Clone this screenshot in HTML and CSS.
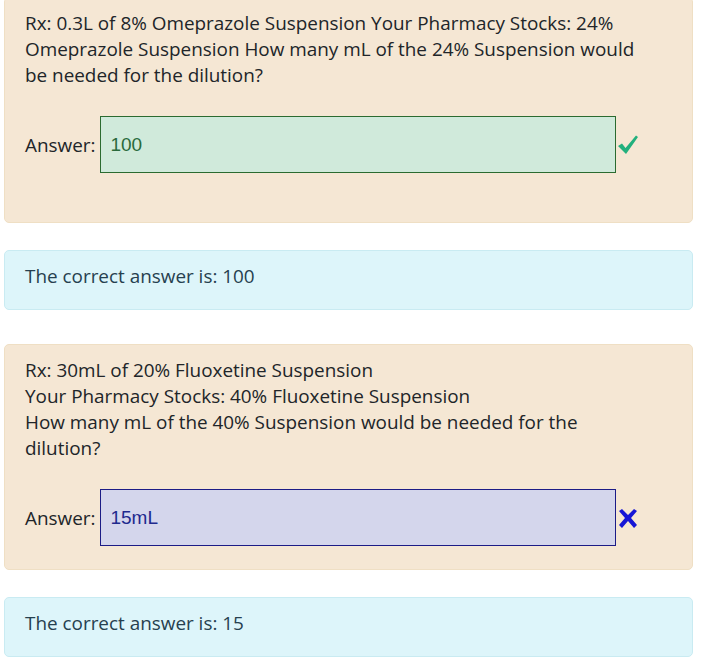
FILE: index.html
```html
<!DOCTYPE html>
<html lang="en">
<head>
    <meta charset="UTF-8">
    <title>Dilution Quiz</title>
    <link rel="stylesheet" href="styles.css">
</head>
<body>
    <div class="quiz">
        <!-- Question 1 -->
        <div class="card question tall">
            <p class="prompt">Rx: 0.3L of 8% Omeprazole Suspension Your Pharmacy Stocks: 24% Omeprazole Suspension How many mL of the 24% Suspension would be needed for the dilution?</p>
            <div class="answer-row">
                <label for="q1">Answer:</label>
                <input type="text" id="q1" class="answer correct" value="100">
                <svg class="mark" width="22" height="22" viewBox="0 0 22 22">
                    <path d="M1 12 L5 9.5 L8.5 14 L19 1.5 L21 3 L9 20 Z" fill="#22b07d"/>
                </svg>
            </div>
        </div>
        <div class="card info">The correct answer is: 100</div>

        <!-- Question 2 -->
        <div class="card question">
            <p class="prompt">Rx: 30mL of 20% Fluoxetine Suspension<br>Your Pharmacy Stocks: 40% Fluoxetine Suspension<br>How many mL of the 40% Suspension would be needed for the dilution?</p>
            <div class="answer-row">
                <label for="q2">Answer:</label>
                <input type="text" id="q2" class="answer wrong" value="15mL">
                <svg class="mark" width="22" height="22" viewBox="0 0 22 22">
                    <path d="M2 4 L5 2 L11 8 L17 2 L20 4 L14 11 L20 18 L17 21 L11 14 L5 21 L2 18 L8 11 Z" fill="#1616d6"/>
                </svg>
            </div>
        </div>
        <div class="card info">The correct answer is: 15</div>
    </div>
</body>
</html>
```

FILE: styles.css
```css
body {
    margin: 0 12px 0 4px;
    background: #fff;
    color: #212529;
    font-family: "Open Sans", "DejaVu Sans", sans-serif;
    font-size: 18.9px;
    line-height: 26px;
}
.quiz {
    margin-top: -3px;
}
.card {
    border: 1px solid #efdfc4;
    border-radius: 5px;
    padding: 12px 20px 23px;
}
.question {
    background-color: #f5e7d4;
    margin-bottom: 27px;
}
.question.tall {
    padding-bottom: 49px;
}
.info {
    background-color: #ddf5fa;
    border-color: #c9ebf2;
    color: #26404f;
    padding-bottom: 20px;
    margin-bottom: 34px;
}
.prompt {
    margin: 0 28px 28px 0;
}
.answer-row {
    display: flex;
    align-items: center;
}
.answer-row label {
    margin-right: 5px;
}
.answer {
    width: 516px;
    height: 57px;
    box-sizing: border-box;
    padding: 0 9px;
    font-family: "Liberation Sans", Arial, sans-serif;
    font-size: 19px;
    border: 1px solid;
    outline: none;
}
.answer.correct {
    background-color: #d0eadb;
    border-color: #2b6b30;
    color: #2a6a3c;
}
.answer.wrong {
    background-color: #d4d6ec;
    border-color: #1c1c86;
    color: #1f2a8e;
}
.mark {
    margin-left: 1px;
}
```
